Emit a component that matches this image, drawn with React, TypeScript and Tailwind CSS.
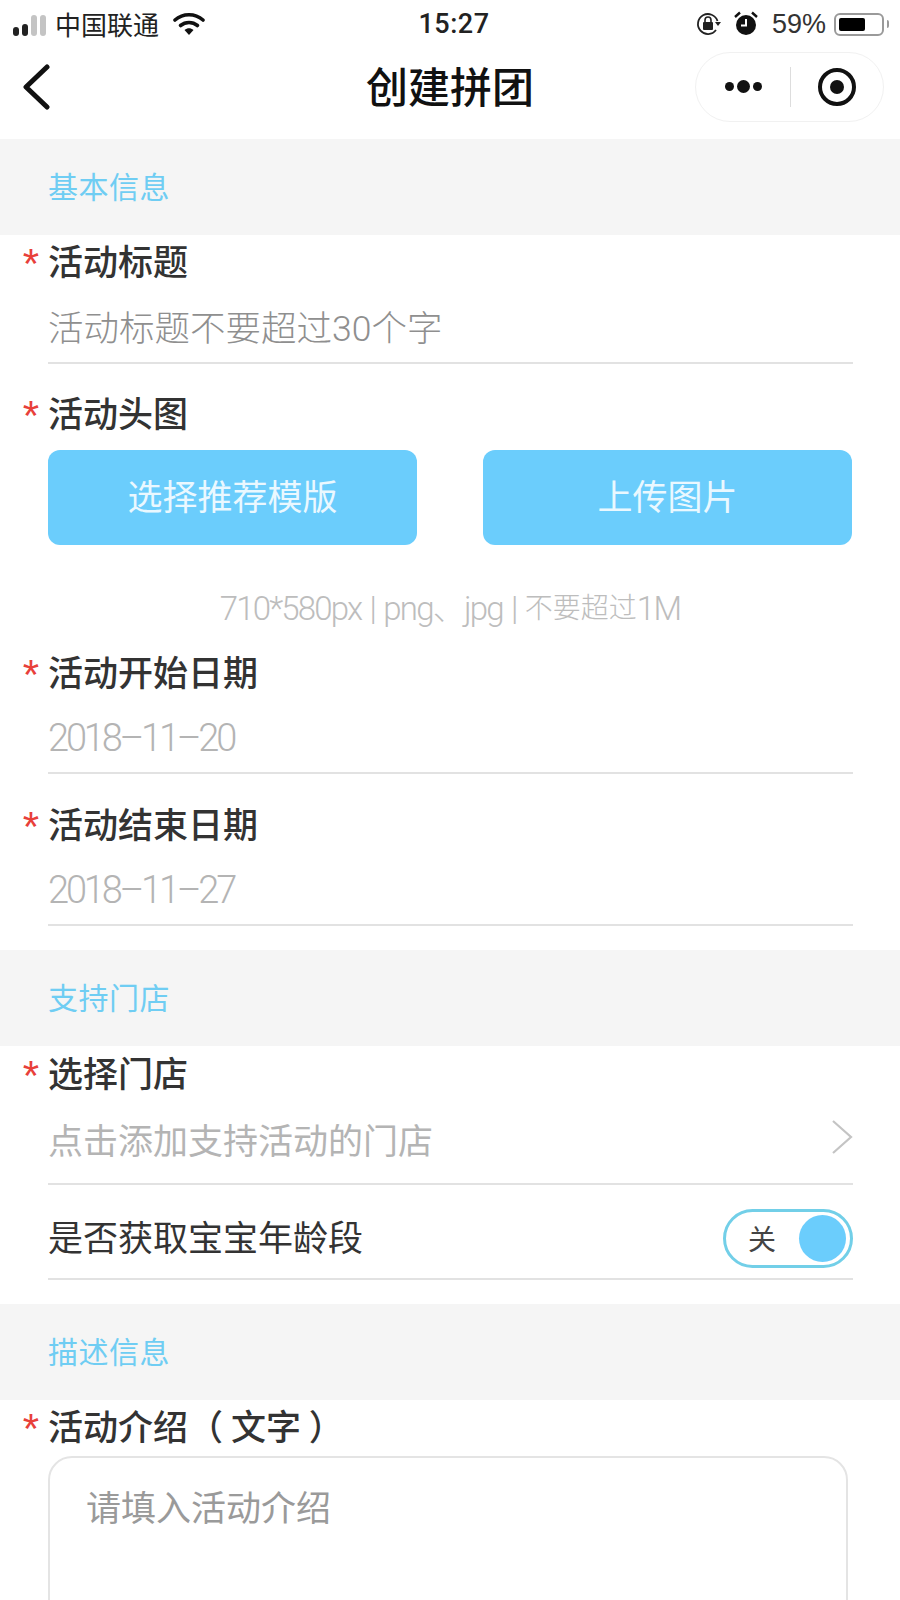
const cjk = "font-['Noto_Sans_CJK_SC','Noto_Sans',sans-serif]";
const latin = "font-['Roboto','Noto_Sans_CJK_SC',sans-serif]";

function SectionBar({ title }: { title: string }) {
  return (
    <div className="flex h-[96px] items-center bg-[#f5f5f5] pb-[3px] pl-[48px] text-[30px] tracking-[0.5px] text-[#6fcdf3]">
      {title}
    </div>
  );
}

function Label({ text, className = "" }: { text: string; className?: string }) {
  return (
    <div className={`flex h-[44px] items-center ${className}`}>
      <span className="flex h-full w-[48px] justify-end pr-[9px] pt-[4px] font-['Liberation_Sans',sans-serif] text-[42px] leading-[44px] text-[#e8403a]">*</span>
      <span className="text-[35px] leading-[44px] font-medium text-[#333]">{text}</span>
    </div>
  );
}

function InputRow({ text, color = "text-[#b4b4b4]", className = "" }: { text: string; color?: string; className?: string }) {
  return (
    <div className={`ml-[48px] mr-[47px] flex items-center border-b-2 border-[#e2e2e2] ${color} ${className}`}>
      {text}
    </div>
  );
}

function StatusBar() {
  return (
    <div className="flex h-[48px] items-center justify-between pl-[13px] pr-[11px] text-[#222]">
      <div className="flex w-[330px] items-center">
        <div className="flex items-end gap-[3px] pt-[2px]">
          <span className="h-[9px] w-[6px] rounded-full bg-[#222]" />
          <span className="h-[12px] w-[6px] rounded-full bg-[#222]" />
          <span className="h-[21px] w-[6px] rounded-full bg-[#c4c4c4]" />
          <span className="h-[21px] w-[6px] rounded-full bg-[#c4c4c4]" />
        </div>
        <span className="ml-[9px] text-[26px] leading-none">中国联通</span>
        <svg className="ml-[14px]" width="32" height="24" viewBox="0 0 32 24" fill="none">
          <path d="M2 8 C10 1 22 1 30 8" stroke="#111" strokeWidth="3.6" strokeLinecap="round" />
          <path d="M7.5 13.5 C12.5 9.5 19.5 9.5 24.5 13.5" stroke="#111" strokeWidth="3.6" strokeLinecap="round" />
          <path d="M11.5 18 C14.5 15.5 17.5 15.5 20.5 18 L16 23 Z" fill="#111" />
        </svg>
      </div>
      <span className="ml-[6px] font-['Roboto',sans-serif] text-[27px] font-medium tracking-[0.5px] text-[#222]">15:27</span>
      <div className="flex w-[330px] items-center justify-end">
        <svg width="26" height="26" viewBox="0 0 26 26" fill="none">
          <path d="M21 19 A10 10 0 1 1 22.5 10" stroke="#222" strokeWidth="1.8" />
          <path d="M20 11 L26 11 L23 15 Z" fill="#222" />
          <rect x="8" y="11" width="10" height="8" rx="1" fill="#222" />
          <path d="M10 11 V9 A3 3 0 0 1 16 9 V11" stroke="#222" strokeWidth="1.6" />
        </svg>
        <svg className="ml-[13px]" width="24" height="26" viewBox="0 0 24 26">
          <circle cx="12" cy="14" r="10" fill="#111" />
          <path d="M12 8 V14.5 H7" stroke="#fff" strokeWidth="2" fill="none" />
          <path d="M1 6 L6 1.5 M23 6 L18 1.5" stroke="#111" strokeWidth="2.4" />
        </svg>
        <span className="ml-[14px] font-['Liberation_Sans',sans-serif] text-[27px] text-[#333]">59%</span>
        <div className="ml-[8px] flex h-[23px] w-[50px] items-center rounded-[6px] border-2 border-[#9a9a9a] p-[3px]">
          <div className="h-full w-[26px] rounded-[2px] bg-black" />
        </div>
        <div className="ml-[3px] h-[8px] w-[2px] rounded-r bg-[#9a9a9a]" />
      </div>
    </div>
  );
}

function NavBar() {
  return (
    <div className="grid h-[91px] grid-cols-[1fr_auto_1fr] items-center pb-[14px]">
      <svg className="ml-[22px]" width="28" height="46" viewBox="0 0 28 46" fill="none">
        <path d="M25 3 L4 23 L25 43" stroke="#111" strokeWidth="5" strokeLinecap="round" strokeLinejoin="round" />
      </svg>
      <span className="mb-[3px] text-[42px] leading-none font-medium text-[#111]">创建拼团</span>
      <div className="mr-[16px] flex h-[70px] w-[189px] items-center justify-self-end rounded-full border border-[#f1f1f1]">
        <div className="flex w-[94px] items-center justify-center gap-[3px]">
          <span className="h-[9px] w-[9px] rounded-full bg-[#111]" />
          <span className="h-[13px] w-[13px] rounded-full bg-[#111]" />
          <span className="h-[9px] w-[9px] rounded-full bg-[#111]" />
        </div>
        <div className="h-[40px] w-px bg-[#ddd]" />
        <div className="flex flex-1 items-center justify-center">
          <div className="flex h-[38px] w-[38px] items-center justify-center rounded-full border-[4px] border-[#111]">
            <span className="h-[14px] w-[14px] rounded-full bg-[#111]" />
          </div>
        </div>
      </div>
    </div>
  );
}

export default function App() {
  return (
    <div className={`h-[1600px] w-[900px] overflow-hidden bg-white ${cjk}`}>
      <StatusBar />
      <NavBar />
      <SectionBar title="基本信息" />

      <Label text="活动标题" className="mt-[3px]" />
      <InputRow text="活动标题不要超过30个字" color="text-[#8f8f8f]" className={`h-[82px] pt-[16px] text-[35.5px] font-light ${latin}`} />

      <Label text="活动头图" className="mt-[26px]" />
      <div className="mx-[48px] mt-[16px] flex justify-between">
        <div className="flex h-[95px] w-[369px] items-center justify-center rounded-[12px] bg-[#6bcdfc] pb-[4px] text-[35px] text-[#eaf8ff]">选择推荐模版</div>
        <div className="flex h-[95px] w-[369px] items-center justify-center rounded-[12px] bg-[#6bcdfc] pb-[4px] text-[35px] text-[#eaf8ff]">上传图片</div>
      </div>
      <div className={`mt-[40px] flex h-[44px] items-center justify-center pt-[4px] text-[#bdbdbd] ${latin}`}>
        <span className="text-[33px] font-light tracking-[-1.8px] whitespace-pre [word-spacing:2px]">710*580px | png、jpg | </span>
        <span className="text-[28px] font-light">不要超过</span>
        <span className="text-[33px] font-light tracking-[-1.6px]">1M</span>
      </div>

      <Label text="活动开始日期" className="mt-[20px]" />
      <InputRow text="2018–11–20" className={`h-[81px] pt-[12px] text-[38px] font-light tracking-[-3.2px] ${latin}`} />

      <Label text="活动结束日期" className="mt-[27px]" />
      <InputRow text="2018–11–27" className={`h-[81px] pt-[12px] text-[38px] font-light tracking-[-3.2px] ${latin}`} />

      <div className="mt-[24px]" />
      <SectionBar title="支持门店" />

      <Label text="选择门店" className="mt-[4px]" />
      <div className="ml-[48px] mr-[47px] flex h-[91px] items-center justify-between border-b-2 border-[#e2e2e2] pt-[2px] text-[35px] text-[#b4b4b4]">
        点击添加支持活动的门店
        <svg className="mb-[6px]" width="22" height="36" viewBox="0 0 22 36" fill="none">
          <path d="M2 2 L20 18 L2 34" stroke="#c4c4c4" strokeWidth="2.2" />
        </svg>
      </div>
      <div className="ml-[48px] mr-[47px] flex h-[95px] items-center justify-between border-b-2 border-[#e2e2e2] pt-[13px] text-[35px] text-[#333]">
        <span className="mb-[6px] leading-none">是否获取宝宝年龄段</span>
        <div className="flex h-[59px] w-[130px] items-center justify-between rounded-full border-[3px] border-[#72cfe8] pl-[22px] pr-[4px]">
          <span className="text-[28px] text-[#444]">关</span>
          <span className="h-[47px] w-[47px] rounded-full bg-[#6bcdfc]" />
        </div>
      </div>

      <div className="mt-[24px]" />
      <SectionBar title="描述信息" />

      <Label text="活动介绍（ 文字 ）" className="mt-[3px]" />
      <div className="ml-[48px] mt-[9px] h-[300px] w-[800px] rounded-[24px] border-2 border-[#e4e4e4] px-[36px] pt-[22px] text-[35px] text-[#9a9a9a]">
        请填入活动介绍
      </div>
    </div>
  );
}
